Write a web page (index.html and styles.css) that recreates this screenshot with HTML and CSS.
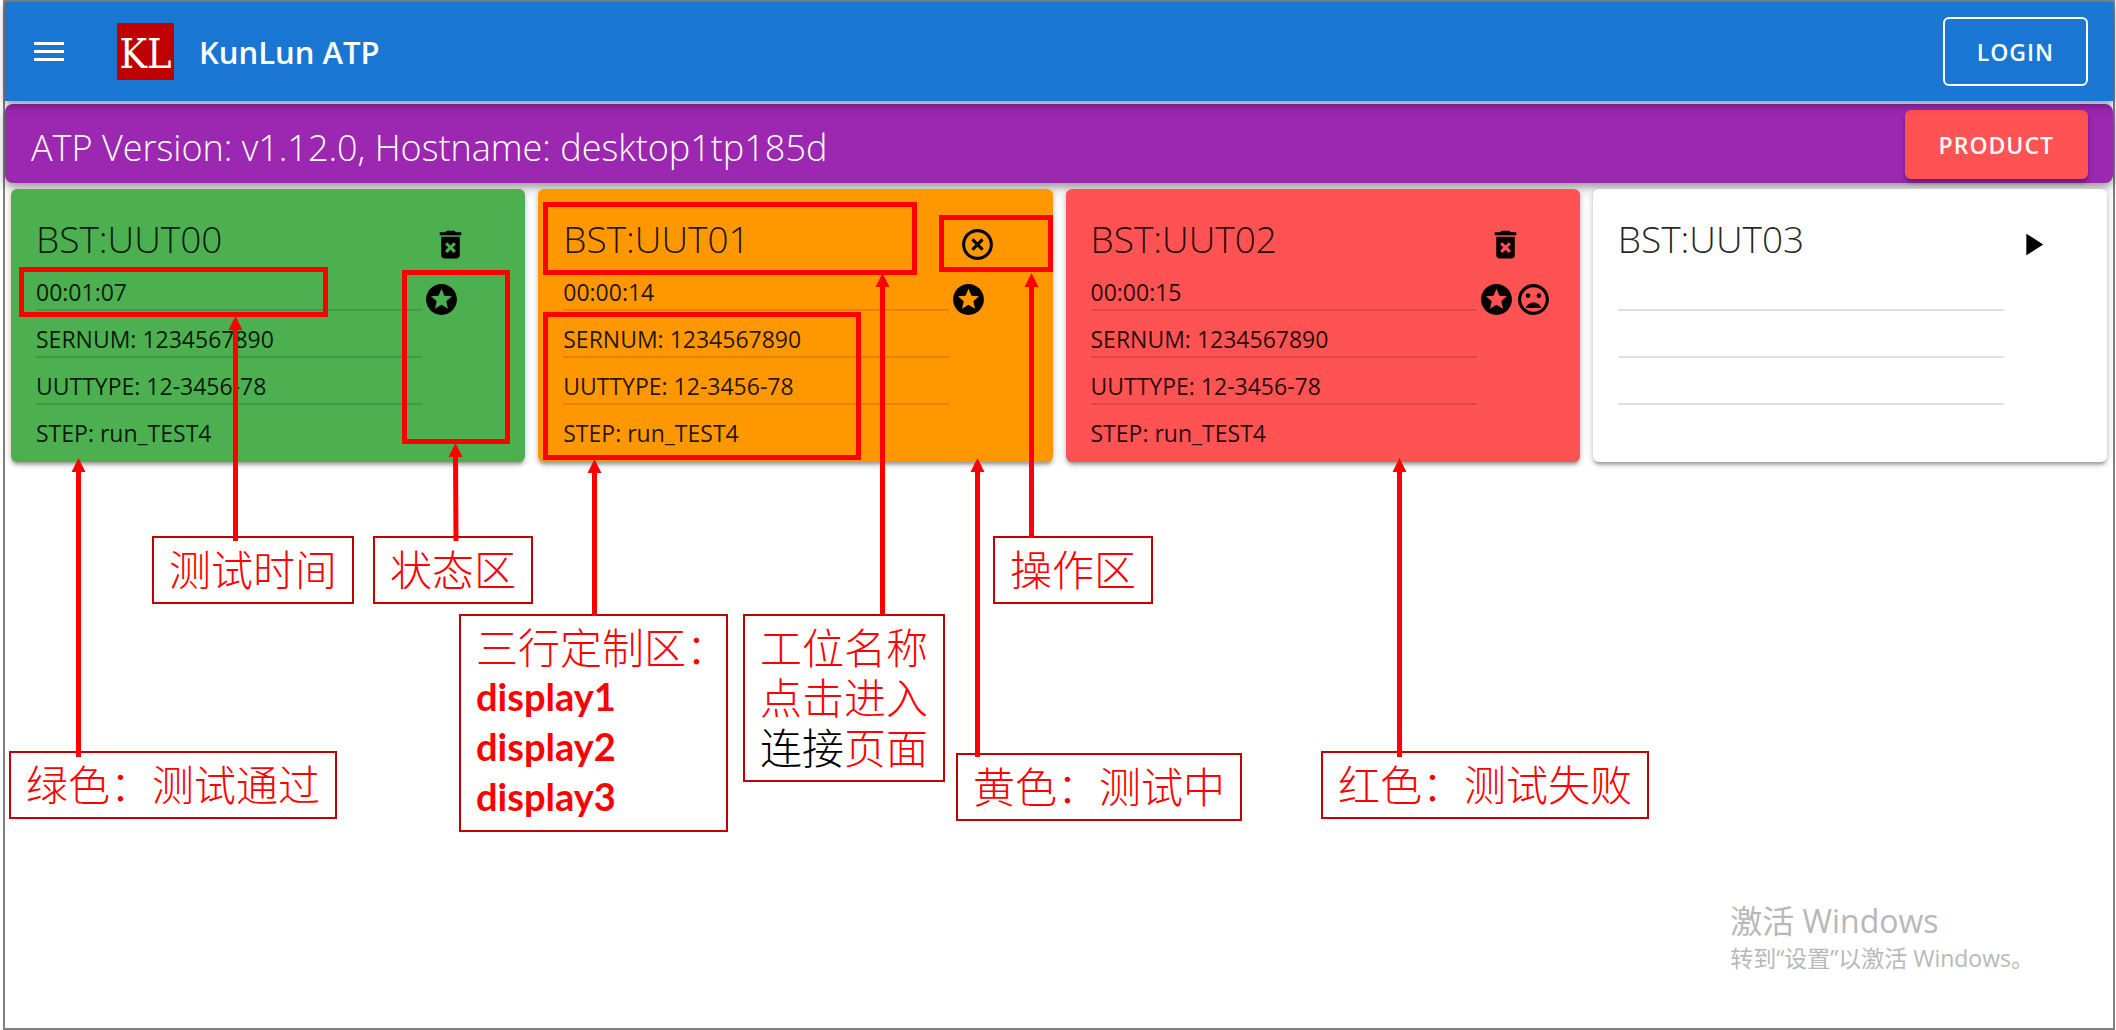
FILE: index.html
```html
<!DOCTYPE html>
<html lang="zh-CN">
<head>
<meta charset="utf-8">
<meta name="viewport" content="width=device-width, initial-scale=1">
<title>KunLun ATP</title>
<link rel="stylesheet" href="styles.css">
</head>
<body>
<svg class="sprite" aria-hidden="true">
  <symbol id="trash" viewBox="0 0 24 24"><path d="M6 19c0 1.1.9 2 2 2h8c1.1 0 2-.9 2-2V7H6v12zm2.46-7.12l1.41-1.41L12 12.59l2.12-2.12 1.41 1.41L13.41 14l2.12 2.12-1.41 1.41L12 15.41l-2.12 2.12-1.41-1.41L10.59 14l-2.13-2.12zM15.5 4l-1-1h-5l-1 1H5v2h14V4z"/></symbol>
  <symbol id="stop" viewBox="0 0 24 24"><path d="M14.59 8L12 10.59 9.41 8 8 9.41 10.59 12 8 14.59 9.41 16 12 13.41 14.59 16 16 14.59 13.41 12 16 9.41 14.59 8zM12 2C6.47 2 2 6.47 2 12s4.47 10 10 10 10-4.47 10-10S17.53 2 12 2zm0 18c-4.41 0-8-3.59-8-8s3.59-8 8-8 8 3.59 8 8-3.59 8-8 8z"/></symbol>
  <symbol id="play" viewBox="0 0 24 24"><path d="M8 5v14l11-7z"/></symbol>
  <symbol id="star" viewBox="0 0 24 24"><path d="M11.99 2C6.47 2 2 6.48 2 12s4.47 10 9.99 10C17.52 22 22 17.52 22 12S17.52 2 11.99 2zm4.24 16L12 15.45 7.77 18l1.12-4.81-3.73-3.23 4.92-.42L12 5l1.92 4.53 4.92.42-3.73 3.23L16.23 18z"/></symbol>
  <symbol id="sad" viewBox="0 0 24 24"><path d="M12 2C6.47 2 2 6.47 2 12s4.47 10 10 10 10-4.47 10-10S17.53 2 12 2zm0 18c-4.42 0-8-3.58-8-8s3.58-8 8-8 8 3.58 8 8-3.58 8-8 8zM12 14c-2.33 0-4.31 1.46-5.11 3.5h10.22c-.8-2.04-2.78-3.5-5.11-3.5z"/><circle cx="15.5" cy="9.5" r="1.5"/><circle cx="8.5" cy="9.5" r="1.5"/></symbol>
</svg>

<div class="frame">
  <header class="appbar">
    <button class="menu" type="button" aria-label="Menu"><svg viewBox="0 0 30 20"><path d="M0 0h30v3H0zM0 8h30v3H0zM0 16h30v3H0z"/></svg></button>
    <span class="logo">KL</span>
    <h1 class="brand">KunLun ATP</h1>
    <button class="btn login" type="button">LOGIN</button>
  </header>

  <section class="infobar">
    <p class="version">ATP Version: v1.12.0, Hostname: desktop1tp185d</p>
    <button class="btn product" type="button">PRODUCT</button>
  </section>

  <main class="cards">
    <article class="card pass">
      <a class="station" href="#uut00">BST:UUT00</a>
      <button class="action" type="button" aria-label="Clear"><svg class="icon"><use href="#trash"/></svg></button>
      <ul class="rows"><li>00:01:07</li><li>SERNUM: 1234567890</li><li>UUTTYPE: 12-3456-78</li><li>STEP: run_TEST4</li></ul>
      <div class="status"><svg class="icon"><use href="#star"/></svg></div>
    </article>
    <article class="card running">
      <a class="station" href="#uut01">BST:UUT01</a>
      <button class="action" type="button" aria-label="Stop"><svg class="icon"><use href="#stop"/></svg></button>
      <ul class="rows"><li>00:00:14</li><li>SERNUM: 1234567890</li><li>UUTTYPE: 12-3456-78</li><li>STEP: run_TEST4</li></ul>
      <div class="status"><svg class="icon"><use href="#star"/></svg></div>
    </article>
    <article class="card fail">
      <a class="station" href="#uut02">BST:UUT02</a>
      <button class="action" type="button" aria-label="Clear"><svg class="icon"><use href="#trash"/></svg></button>
      <ul class="rows"><li>00:00:15</li><li>SERNUM: 1234567890</li><li>UUTTYPE: 12-3456-78</li><li>STEP: run_TEST4</li></ul>
      <div class="status"><svg class="icon"><use href="#star"/></svg><svg class="icon"><use href="#sad"/></svg></div>
    </article>
    <article class="card idle">
      <a class="station" href="#uut03">BST:UUT03</a>
      <button class="action" type="button" aria-label="Start"><svg class="icon"><use href="#play"/></svg></button>
      <ul class="rows"><li></li><li></li><li></li><li></li></ul>
      <div class="status"></div>
    </article>
  </main>

  <aside class="watermark">
    <p class="wm-title">激活 Windows</p>
    <p class="wm-text">转到“设置”以激活 Windows。</p>
  </aside>
</div>

<div class="notes">
  <div class="mark mark-time"></div>
  <div class="mark mark-status"></div>
  <div class="mark mark-name"></div>
  <div class="mark mark-action"></div>
  <div class="mark mark-rows"></div>

  <div class="note note-time">测试时间</div>
  <div class="note note-status">状态区</div>
  <div class="note note-action">操作区</div>
  <div class="note note-rows">三行定制区：<b>display1</b><b>display2</b><b>display3</b></div>
  <div class="note note-name">工位名称<br>点击进入<br><span class="dark">连接</span>页面</div>
  <div class="note note-pass">绿色：测试通过</div>
  <div class="note note-running">黄色：测试中</div>
  <div class="note note-fail">红色：测试失败</div>

  <svg class="arrows" width="1700" height="840" aria-hidden="true">
    <g class="lines"><path d="M78.500 757V468M235.500 541V327M456 541L455.500 454M594.500 616V468M882.500 615V284M977.500 757V468M1031.500 538V284M1399.500 757V468"/></g>
    <g class="heads"><path d="M78.500 458l7 14h-14zM235.500 316l7 14h-14zM455.500 443l7 14h-14zM594.500 459l7 14h-14zM882.500 273l7 14h-14zM977.500 458l7 14h-14zM1031.500 273l7 14h-14zM1399.500 458l7 14h-14z"/></g>
  </svg>
</div>
</body>
</html>
```
FILE: styles.css
```css
* { box-sizing: border-box; }

body {
  margin: 0;
  position: relative;
  background: #fff;
  color: rgba(0, 0, 0, .87);
  font-family: "Open Sans", "Noto Sans", "Noto Sans CJK SC", sans-serif;
}

p, h1, ul { margin: 0; padding: 0; }
ul { list-style: none; }
button { font: inherit; cursor: pointer; }
.sprite { position: absolute; width: 0; height: 0; }

.frame {
  min-height: 100vh;
  margin: 0 1px 0 3px;
  border: 2px solid #808080;
  display: flex;
  flex-direction: column;
}

/* Top bars */
.appbar {
  position: relative;
  z-index: 1;
  height: 99px;
  padding: 0 25px 0 29px;
  display: flex;
  align-items: center;
  background: #1976d2;
  color: #fff;
  box-shadow: 0 3px 6px -1px rgba(0, 0, 0, .2), 0 6px 8px rgba(0, 0, 0, .14), 0 2px 15px rgba(0, 0, 0, .12);
}
.menu { padding: 0; border: 0; background: none; }
.menu svg { display: block; width: 30px; height: 20px; fill: #fff; }
.logo {
  width: 57px;
  height: 57px;
  margin: 0 25px 0 53px;
  background: #c00000;
  color: #fff;
  font: 41px/62px "DejaVu Serif Condensed", "Liberation Serif", serif;
  text-align: center;
}
.brand { flex: 1; font-size: 31px; line-height: 48px; font-weight: 600; }
.btn {
  height: 69px;
  padding: 0 34px;
  border: 0;
  border-radius: 6px;
  color: #fff;
  font-size: 23px;
  font-weight: 600;
  letter-spacing: 1px;
}
.login { padding: 0 32px; border: 2px solid #fff; background: none; }
.infobar {
  height: 79px;
  margin-top: 3px;
  padding: 2px 25px 0 26px;
  border-radius: 8px;
  display: flex;
  align-items: center;
  justify-content: space-between;
  background: #9c27b0;
  color: #fff;
  box-shadow: 0 4px 6px rgba(0, 0, 0, .25), 0 6px 15px rgba(0, 0, 0, .18);
}
.version { font-size: 36px; font-weight: 300; line-height: 48px; padding-top: 6px; }
.product { background: #ff5252; box-shadow: 0 4px 4px rgba(0, 0, 0, .3); }

/* Station cards */
.cards {
  padding: 6px;
  display: grid;
  grid-template-columns: repeat(4, minmax(0, 1fr));
  gap: 13px;
}
.card {
  padding: 24px 24px 10px 25px;
  border-radius: 6px;
  display: grid;
  grid-template-columns: 83% 1fr;
  grid-template-rows: 51px auto;
  box-shadow: 0 4px 3px -2px rgba(0, 0, 0, .2), 0 3px 4px rgba(0, 0, 0, .16), 0 2px 8px rgba(0, 0, 0, .14);
}
.pass { background: #4caf50; }
.running { background: #ff9800; }
.fail { background: #ff5252; }
.idle { background: #fff; }
.station { color: rgba(0, 0, 0, .87); font-size: 37px; line-height: 52px; font-weight: 300; text-decoration: none; }
.action { padding: 12px 0 0 10px; border: 0; background: none; justify-self: start; color: #000; }
.icon { display: block; width: 37px; height: 37px; fill: #000; }
.rows li {
  height: 47px;
  padding-top: 12px;
  border-bottom: 2px solid rgba(0, 0, 0, .12);
  font-size: 23px;
  line-height: 33px;
}
.rows li:last-child { border-bottom: 0; }
.status { display: flex; padding: 17px 0 0 1px; }

.watermark { margin: auto 79px 54px auto; color: #b8b8b8; }
.wm-title { font-size: 32px; line-height: 42px; }
.wm-text { font-size: 23px; line-height: 32px; }

/* Callouts laid over the page */
.notes { position: absolute; top: 0; left: 0; }
.mark { position: absolute; border: 5px solid #f00; }
.mark-time { left: 19px; top: 267px; width: 309px; height: 50px; }
.mark-status { left: 402px; top: 270px; width: 108px; height: 174px; }
.mark-name { left: 543px; top: 202px; width: 374px; height: 73px; }
.mark-action { left: 939px; top: 215px; width: 114px; height: 57px; }
.mark-rows { left: 543px; top: 312px; width: 318px; height: 148px; }
.note {
  position: absolute;
  padding: 5px 15px 9px;
  border: 2px solid #c00000;
  background: #fff;
  color: #f00;
  font: 300 42px/50px "Noto Sans CJK SC", sans-serif;
  white-space: nowrap;
}
.note b { display: block; font: 700 38px/50px Lato, sans-serif; }
.dark { color: #000; }
.note-time { left: 152px; top: 536px; }
.note-status { left: 373px; top: 536px; }
.note-action { left: 993px; top: 536px; }
.note-rows { left: 459px; top: 614px; width: 269px; }
.note-name { left: 743px; top: 614px; }
.note-pass { left: 9px; top: 751px; }
.note-running { left: 956px; top: 753px; }
.note-fail { left: 1321px; top: 751px; }
.arrows { position: absolute; top: 0; left: 0; }
.lines { stroke: #f00; stroke-width: 5px; }
.heads { fill: #f00; }
```
